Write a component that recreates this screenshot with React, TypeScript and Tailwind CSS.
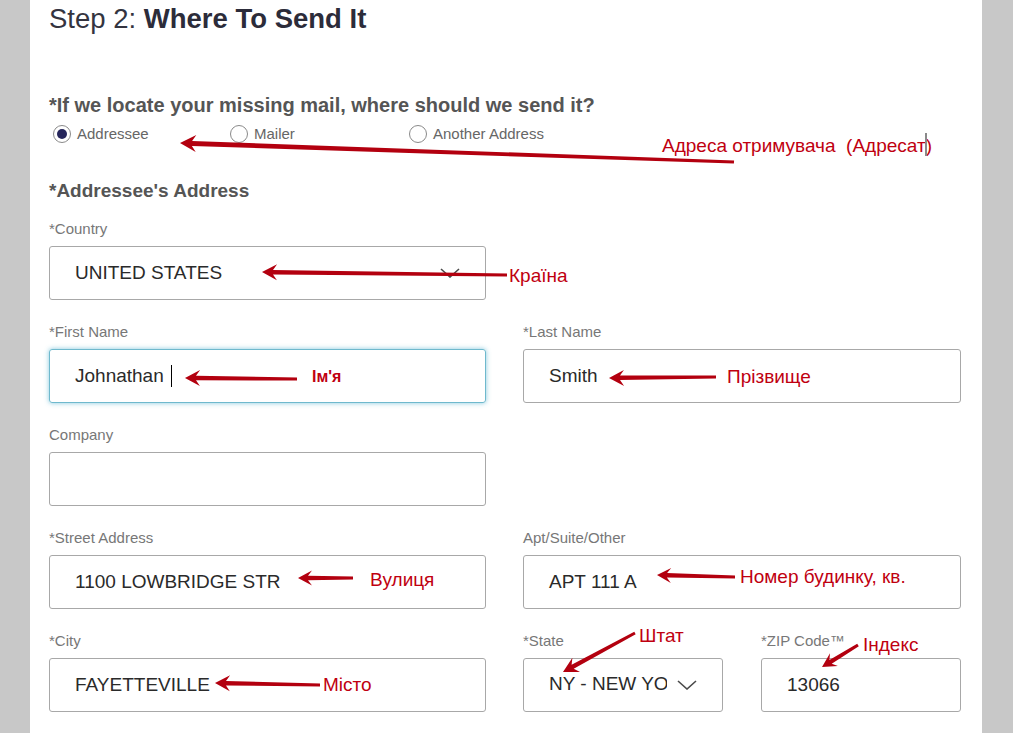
import React from "react";

// annotation arrows: [tailX, tailY, tipX, tipY, headLen, headHalf, neckW, tailW]
const arrows: number[][] = [
  [734, 162, 180, 143, 16, 8.5, 5, 3],
  [507, 275, 262, 272, 15, 8, 4.5, 3],
  [297, 379, 185, 378, 15, 8, 4.5, 3],
  [716, 377, 609, 378, 15, 8, 4.5, 3],
  [353, 578, 298, 578, 14, 7.5, 4.5, 3],
  [735, 577, 657, 575, 14, 7.5, 4.5, 3],
  [320, 685, 215, 683, 15, 8, 4.5, 3],
  [635, 633, 563, 672, 15, 8, 4.5, 3],
  [858, 645, 822, 667, 14, 7.5, 4.5, 3],
];

function arrowPoints([x1, y1, x2, y2, head, half, w1, w2]: number[]) {
  const dx = x2 - x1;
  const dy = y2 - y1;
  const len = Math.hypot(dx, dy);
  const ux = dx / len;
  const uy = dy / len;
  const nx = -uy;
  const ny = ux;
  const bx = x2 - ux * head;
  const by = y2 - uy * head;
  const kx = x2 - ux * (head - 4);
  const ky = y2 - uy * (head - 4);
  const pts = [
    [x2, y2],
    [bx + nx * half, by + ny * half],
    [kx + (nx * w1) / 2, ky + (ny * w1) / 2],
    [x1 + (nx * w2) / 2, y1 + (ny * w2) / 2],
    [x1 - (nx * w2) / 2, y1 - (ny * w2) / 2],
    [kx - (nx * w1) / 2, ky - (ny * w1) / 2],
    [bx - nx * half, by - ny * half],
  ];
  return pts.map((p) => `${p[0].toFixed(1)},${p[1].toFixed(1)}`).join(" ");
}

function Chevron() {
  return (
    <svg width="20" height="10" viewBox="0 0 20 10" className="shrink-0">
      <path d="M1 1 L10 9 L19 1" fill="none" stroke="#4a4a4a" strokeWidth="1.6" />
    </svg>
  );
}

function Field({ label, children, focused }: { label: string; children?: React.ReactNode; focused?: boolean }) {
  return (
    <div className="flex flex-col">
      <label className="text-[15px] leading-[18px] text-[#777]">{label}</label>
      <div
        className={
          focused
            ? "mt-[8px] flex h-[54px] items-center rounded-[3px] border border-[#6fb9cd] pl-[25px] pr-[25px] shadow-[0_0_5px_rgba(100,185,212,0.8)]"
            : "mt-[8px] flex h-[54px] items-center rounded-[3px] border border-[#a8a8a8] pl-[25px] pr-[25px]"
        }
      >
        {children}
      </div>
    </div>
  );
}

function Val({ children }: { children: React.ReactNode }) {
  return <span className="text-[19px] leading-[22px] text-[#2a2a2a]">{children}</span>;
}

function Radio({ label, checked, className }: { label: string; checked?: boolean; className: string }) {
  return (
    <div className={`flex items-center gap-[6px] ${className}`}>
      <span className="flex h-[18px] w-[18px] items-center justify-center rounded-full border border-[#8a8a8a]">
        {checked && <span className="h-[10px] w-[10px] rounded-full bg-[#26265c]" />}
      </span>
      <span className="text-[15px] leading-[20px] text-[#666]">{label}</span>
    </div>
  );
}

function Note({ x, y, children, small }: { x: number; y: number; children: React.ReactNode; small?: boolean }) {
  // y = vertical centre of the capitals
  return (
    <div
      className={
        small
          ? "absolute whitespace-pre text-[16px] font-bold leading-[18px] text-[#c00010]"
          : "absolute whitespace-pre text-[19px] leading-[18px] text-[#c00010]"
      }
      style={{ left: x, top: y - 9 }}
    >
      {children}
    </div>
  );
}

export default function App() {
  return (
    <div className="relative h-[733px] w-[1013px] overflow-hidden bg-[#c8c8c8] font-['Liberation_Sans',Arial,sans-serif]">
      <div className="ml-[30px] h-full w-[952px] bg-white pl-[19px] pr-[21px]">
        {/* Title */}
        <h1 className="pt-[3px] text-[27.5px] leading-[32px] text-[#34343f]">
          Step 2: <span className="font-bold text-[#2c2c3a]">Where To Send It</span>
        </h1>

        {/* Question */}
        <p className="mt-[58px] text-[20px] font-bold leading-[24px] text-[#555]">
          *If we locate your missing mail, where should we send it?
        </p>
        <div className="ml-[4px] mt-[7px] flex">
          <Radio label="Addressee" checked className="w-[177px]" />
          <Radio label="Mailer" className="w-[179px]" />
          <Radio label="Another Address" className="" />
        </div>

        {/* Address */}
        <h2 className="mt-[35px] text-[19px] font-bold leading-[24px] text-[#555]">*Addressee's Address</h2>

        <div className="mt-[17px] flex flex-col gap-[23px]">
          <div className="grid grid-cols-[437px_438px] gap-x-[37px]">
            <Field label="*Country">
              <Val>UNITED STATES</Val>
              <span className="flex-1" />
              <Chevron />
            </Field>
          </div>

          <div className="grid grid-cols-[437px_438px] gap-x-[37px]">
            <Field label="*First Name" focused>
              <Val>Johnathan</Val>
              <span className="ml-[7px] h-[22px] w-px bg-black" />
            </Field>
            <Field label="*Last Name">
              <Val>Smith</Val>
            </Field>
          </div>

          <div className="grid grid-cols-[437px_438px] gap-x-[37px]">
            <Field label="Company" />
          </div>

          <div className="grid grid-cols-[437px_438px] gap-x-[37px]">
            <Field label="*Street Address">
              <Val>1100 LOWBRIDGE STR</Val>
            </Field>
            <Field label="Apt/Suite/Other">
              <Val>APT 111 A</Val>
            </Field>
          </div>

          <div className="grid grid-cols-[437px_438px] gap-x-[37px]">
            <Field label="*City">
              <Val>FAYETTEVILLE</Val>
            </Field>
            <div className="grid grid-cols-[200px_200px] gap-x-[38px]">
              <Field label="*State">
                <span className="w-[118px] shrink-0 overflow-hidden whitespace-nowrap">
                  <Val>NY - NEW YORK</Val>
                </span>
                <span className="ml-[10px]">
                  <Chevron />
                </span>
              </Field>
              <Field label="*ZIP Code™">
                <Val>13066</Val>
              </Field>
            </div>
          </div>
        </div>
      </div>

      {/* Annotations */}
      <svg className="pointer-events-none absolute left-0 top-0" width="1013" height="733">
        {arrows.map((a, i) => (
          <polygon key={i} points={arrowPoints(a)} fill="#b3000f" />
        ))}
      </svg>

      <Note x={662} y={146}>Адреса отримувача  (Адресат)</Note>
      <div className="absolute left-[925px] top-[133px] h-[23px] w-[2px] bg-[#8a8a8a]" />
      <Note x={509} y={276}>Країна</Note>
      <Note x={312} y={377} small>Ім'я</Note>
      <Note x={727} y={377}>Прізвище</Note>
      <Note x={370} y={580}>Вулиця</Note>
      <Note x={740} y={577}>Номер будинку, кв.</Note>
      <Note x={323} y={685}>Місто</Note>
      <Note x={639} y={636}>Штат</Note>
      <Note x={863} y={645}>Індекс</Note>
    </div>
  );
}
